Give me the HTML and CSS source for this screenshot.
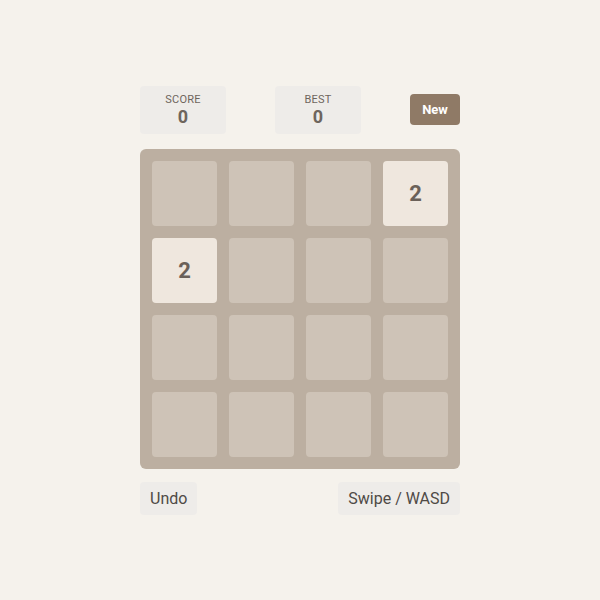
FILE: index.html
```html
<!DOCTYPE html>
<html lang="en">
<head>
  <meta charset="UTF-8" />
  <meta name="viewport" content="width=device-width, initial-scale=1" />
  <title>2048</title>
  <link rel="stylesheet" href="styles.css">
</head>
<body>

  <div class="game">
    <div class="header">
      <div class="score-box">
        <span class="label">SCORE</span>
        <span class="value" id="score">0</span>
      </div>
      <div class="score-box">
        <span class="label">BEST</span>
        <span class="value" id="best">0</span>
      </div>
      <button class="new-button" id="newButton">New</button>
    </div>

    <div class="board" id="board">
      <div class="cell"></div>
      <div class="cell"></div>
      <div class="cell"></div>
      <div class="cell tile-2">2</div>
      <div class="cell tile-2">2</div>
      <div class="cell"></div>
      <div class="cell"></div>
      <div class="cell"></div>
      <div class="cell"></div>
      <div class="cell"></div>
      <div class="cell"></div>
      <div class="cell"></div>
      <div class="cell"></div>
      <div class="cell"></div>
      <div class="cell"></div>
      <div class="cell"></div>
    </div>

    <div class="footer">
      <button class="soft-button" id="undoButton">Undo</button>
      <span class="soft-button hint">Swipe / WASD</span>
    </div>
  </div>

</body>
</html>
```

FILE: styles.css
```css
* {
  margin: 0;
  padding: 0;
  box-sizing: border-box;
  font-family: Roboto, "Liberation Sans", sans-serif;
}
body {
  min-height: 100vh;
  background: #f5f2ec;
  display: flex;
  justify-content: center;
  align-items: center;
}
.game {
  width: 320px;
  display: flex;
  flex-direction: column;
}
.header {
  display: flex;
  justify-content: space-between;
  align-items: center;
  margin-bottom: 15px;
}
.score-box {
  width: 86px;
  height: 48px;
  padding-top: 2px;
  background: #eeece9;
  border-radius: 4px;
  display: flex;
  flex-direction: column;
  align-items: center;
  justify-content: center;
  color: #6e655d;
}
.score-box .label {
  font-size: 11px;
  line-height: 13px;
  letter-spacing: 0.2px;
}
.score-box .value {
  font-size: 18px;
  line-height: 22px;
  font-weight: 700;
}
.new-button {
  width: 50px;
  height: 31px;
  background: #8f7a66;
  color: #fff;
  border: none;
  border-radius: 4px;
  font-size: 13px;
  font-weight: 700;
  cursor: pointer;
}
.board {
  display: grid;
  grid-template-columns: repeat(4, 65px);
  grid-auto-rows: 65px;
  gap: 12px;
  padding: 12px;
  background: #bcafa1;
  border-radius: 6px;
}
.cell {
  background: #cec3b7;
  border-radius: 4px;
  display: flex;
  align-items: center;
  justify-content: center;
  font-size: 22px;
  font-weight: 700;
  color: #6b6159;
}
.tile-2 {
  background: #efe7de;
}
.footer {
  display: flex;
  justify-content: space-between;
  margin-top: 13px;
}
.soft-button {
  background: #eeece9;
  border: none;
  border-radius: 4px;
  padding: 6px 10px;
  font-size: 16px;
  line-height: 21px;
  color: #4f4a46;
  cursor: pointer;
}
.hint {
  cursor: default;
}
```
